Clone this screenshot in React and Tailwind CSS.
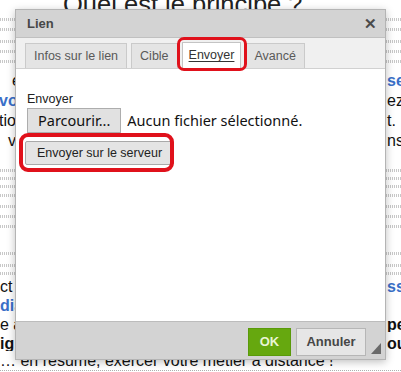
import React from 'react';

const hatch =
  'h-[3px] bg-[repeating-linear-gradient(90deg,#c8c8c8_0_1px,#ffffff_1px_2px)]';

function Row({ left, right, leftClass = '', rightClass = '', h = 'h-[20px]' }) {
  return (
    <div className={`grid grid-cols-[387px_1fr] ${h} items-center whitespace-nowrap overflow-hidden`}>
      <span className={leftClass}>{left}</span>
      <span className={rightClass}>{right}</span>
    </div>
  );
}

function Tab({ label, active }) {
  if (active) {
    return (
      <div className="h-[26px] px-[6px] flex items-center bg-white border border-b-0 border-[#c4c4c4] text-[#333] underline underline-offset-2">
        {label}
      </div>
    );
  }
  return (
    <div className="h-[25px] px-[8px] flex items-center bg-[#e4e4e4] border border-b-0 border-[#cacaca] text-[#595959]">
      {label}
    </div>
  );
}

export default function App() {
  return (
    <div className="relative w-[401px] h-[372px] overflow-hidden bg-white text-[#111] font-['Liberation_Sans',Arial,sans-serif]">
      {/* page behind the dialog */}
      <div className="flex flex-col text-[16px]">
        <h1 className="mt-[-10px] h-[28px] leading-[28px] pl-[63px] text-[25.5px] text-[#222] whitespace-nowrap">
          Quel est le principe ?
        </h1>
        <div className={`${hatch} mt-[0px]`} />
        <div className={`${hatch} mt-[7px]`} />
        <div className={`${hatch} mt-[9px]`} />
        <div className={`${hatch} mt-[7px]`} />
        <div className={`${hatch} mt-[7px]`} />
        <div className="h-[6px]" />
        <Row left="en" right="ses" leftClass="pl-[12px]" rightClass="font-bold text-[#3a6fc8]" />
        <Row left="vous" right="ez" leftClass="font-bold text-[#3a6fc8] ml-[-1px]" />
        <Row left="tion" right="t." leftClass="ml-[-1px]" />
        <Row left="vous" right="ns" leftClass="pl-[8px]" />
        <div className="h-[20px]" />
        <div className={hatch} />
        <div className={`${hatch} mt-[5px]`} />
        <div className={`${hatch} mt-[5px]`} />
        <div className={`${hatch} mt-[6px]`} />
        <div className={`${hatch} mt-[8px]`} />
        <div className={`${hatch} mt-[7px]`} />
        <div className={`${hatch} mt-[7px]`} />
        <div className={`${hatch} mt-[24px]`} />
        <div className={`${hatch} mt-[9px]`} />
        <div className={`${hatch} mt-[5px]`} />
        <Row left="ct et" right="ss" h="h-[19px] mt-[0px]" rightClass="font-bold text-[#3a6fc8]" />
        <Row left="diaire" leftClass="font-bold text-[#3a6fc8]" h="h-[19px]" />
        <Row left="e au" right="pe" rightClass="font-bold" h="h-[19px]" />
        <Row left="ig" right="ou" leftClass="font-bold" rightClass="font-bold" h="h-[19px]" />
        <div className="h-[19px] leading-[19px] whitespace-nowrap">… en résumé, exercer votre métier à distance !</div>
        <div className="border-t border-dotted border-[#b0b0b0]" />
      </div>

      {/* link dialog */}
      <div className="absolute left-[15px] top-[9px] w-[371px] h-[351px] flex flex-col border border-[#b4b4b4] bg-white shadow-[0_2px_8px_rgba(0,0,0,0.25)] text-[13px]">
        <div className="h-[28px] flex items-center justify-between pl-[11px] pr-[8px] bg-[#d3d3d3] border-b border-[#c0c0c0]">
          <span className="font-bold text-[#474747] text-[13px]">Lien</span>
          <span className="text-[#4a4a4a] text-[15px] font-bold leading-none">✕</span>
        </div>
        <div className="h-[31px] flex items-end gap-[4px] pl-[9px] bg-[#f0f0f0] border-b border-[#d1d1d1] text-[12.5px]">
          <Tab label="Infos sur le lien" />
          <Tab label="Cible" />
          <div className="relative">
            <Tab label="Envoyer" active />
            <div className="absolute left-[-5px] top-[-5px] w-[70px] h-[34px] rounded-[7px] border-[3px] border-[#e0111b]" />
          </div>
          <Tab label="Avancé" />
        </div>
        <div className="flex-1 pl-[11px] pt-[22px] flex flex-col items-start">
          <div className="text-[12.5px] text-[#222] leading-[16px]">Envoyer</div>
          <div className="mt-[1px] flex items-center gap-[6px] font-['Noto_Sans',sans-serif] text-[14.5px] text-[#111]">
            <div className="h-[25px] px-[10px] flex items-center bg-[#e1e1e1] border border-[#adadad]">Parcourir...</div>
            <span>Aucun fichier sélectionné.</span>
          </div>
          <div className="relative mt-[8px] ml-[-2px]">
            <div className="h-[24px] px-[11px] flex items-center bg-[#e4e4e4] border border-[#a9a9a9] rounded-[2px] text-[12.5px] text-[#222]">
              Envoyer sur le serveur
            </div>
            <div className="absolute left-[-6px] top-[-8px] w-[155px] h-[39px] rounded-[9px] border-[4px] border-[#e0111b]" />
          </div>
        </div>
        <div className="relative h-[38px] flex items-start justify-end gap-[5px] pt-[6px] pr-[19px] bg-[#d3d3d3] border-t border-[#bcbcbc]">
          <div className="h-[28px] w-[43px] flex items-center justify-center bg-[#66a80f] border border-[#5a9a0a] text-[#e9f5d5] font-bold text-[13px]">
            OK
          </div>
          <div className="h-[28px] w-[70px] flex items-center justify-center bg-[#e6e6e6] border border-[#b6b6b6] text-[#474747] font-bold text-[13px]">
            Annuler
          </div>
          <svg className="absolute right-[4px] bottom-[5px]" width="10" height="11" viewBox="0 0 10 11">
            <polygon points="10,0 10,11 0,11" fill="#6a6a6a" />
          </svg>
        </div>
      </div>
    </div>
  );
}
